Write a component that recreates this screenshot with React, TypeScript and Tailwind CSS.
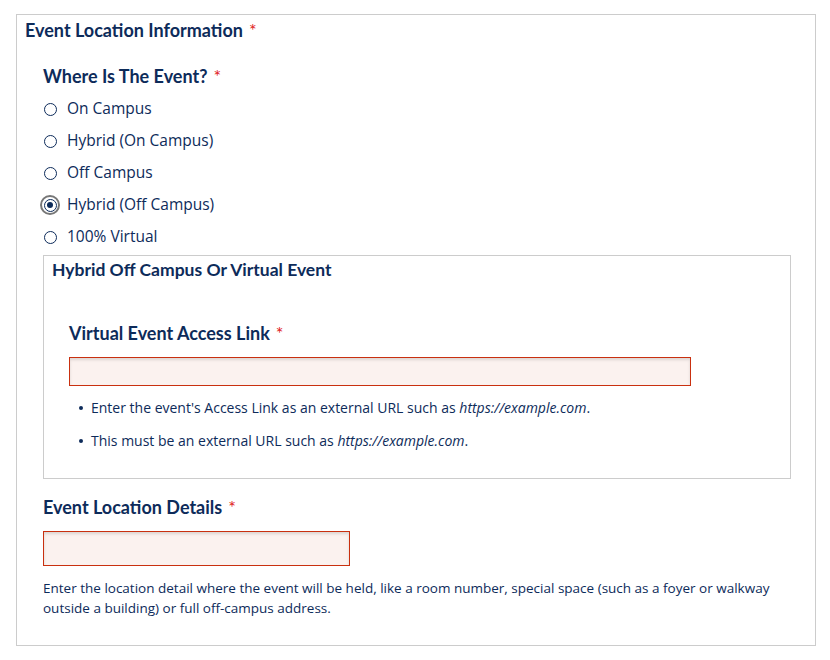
import React from "react";

const Req = () => <span className="ml-[6px] text-[#e0201b] font-normal">*</span>;

const body = { fontFamily: "'Open Sans', Lato, sans-serif" };

function Radio({ label, checked }: { label: string; checked?: boolean }) {
  return (
    <div className="flex items-center h-[32px]">
      <div className="w-[14px] flex justify-center">
        {checked ? (
          <div className="w-[20px] h-[20px] rounded-full border-2 border-[#777] flex items-center justify-center shrink-0">
            <div className="w-[13px] h-[13px] rounded-full border border-[#0d2b5a] flex items-center justify-center">
              <div className="w-[6px] h-[6px] rounded-full bg-[#0d2b5a]" />
            </div>
          </div>
        ) : (
          <div className="w-[13px] h-[13px] rounded-full border border-[#0d2b5a] shrink-0" />
        )}
      </div>
      <span className="ml-[10px] text-[15.5px]" style={body}>{label}</span>
    </div>
  );
}

export default function App() {
  return (
    <div
      className="w-[830px] h-[660px] bg-white text-[#0d2b5a] pt-[14px] px-[16px]"
      style={{ fontFamily: "Lato, 'Open Sans', sans-serif" }}
    >
      <div className="w-[800px] h-[632px] border border-[#cccccc] pl-[8px]">
        <div className="h-[28px] flex items-end text-[18px] font-bold leading-none pb-[4px]">
          Event Location Information<Req />
        </div>
        <div className="pl-[18px]">
          <div className="mt-[24px] text-[18px] font-bold leading-none">
            Where Is The Event?<Req />
          </div>
          <div className="mt-[8px] flex flex-col">
            <Radio label="On Campus" />
            <Radio label="Hybrid (On Campus)" />
            <Radio label="Off Campus" />
            <Radio label="Hybrid (Off Campus)" checked />
            <Radio label="100% Virtual" />
          </div>
          <div className="mt-[2px] w-[748px] h-[224px] border border-[#cccccc] pl-[8px]">
            <div className="mt-[5px] text-[17.5px] font-bold leading-[18px]">
              Hybrid Off Campus Or Virtual Event
            </div>
            <div className="pl-[17px]">
              <div className="mt-[45px] text-[18px] font-bold leading-none">
                Virtual Event Access Link<Req />
              </div>
              <div className="mt-[15px] w-[622px] h-[29px] border border-[#c9300f] bg-[#fbf2ef] shadow-[inset_0_2px_3px_rgba(0,0,0,0.12)]" />
              <ul className="mt-[14px] pl-[10px] text-[14px] leading-[16px]" style={body}>
                <li className="flex items-center">
                  <span className="w-[4px] h-[4px] rounded-full bg-[#0d2b5a] mr-[8px]" />
                  <span>
                    Enter the event's Access Link as an external URL such as <i>https://example.com</i>.
                  </span>
                </li>
                <li className="flex items-center mt-[17px]">
                  <span className="w-[4px] h-[4px] rounded-full bg-[#0d2b5a] mr-[8px]" />
                  <span>
                    This must be an external URL such as <i>https://example.com</i>.
                  </span>
                </li>
              </ul>
            </div>
          </div>
          <div className="mt-[19px] text-[18px] font-bold leading-none">
            Event Location Details<Req />
          </div>
          <div className="mt-[15px] w-[307px] h-[35px] border border-[#c9300f] bg-[#fbf2ef] shadow-[inset_0_2px_3px_rgba(0,0,0,0.12)]" />
          <p className="mt-[12px] text-[13.5px] leading-[20px] pr-[20px]" style={body}>
            Enter the location detail where the event will be held, like a room number, special space (such as a foyer or walkway outside a building) or full off-campus address.
          </p>
        </div>
      </div>
    </div>
  );
}
